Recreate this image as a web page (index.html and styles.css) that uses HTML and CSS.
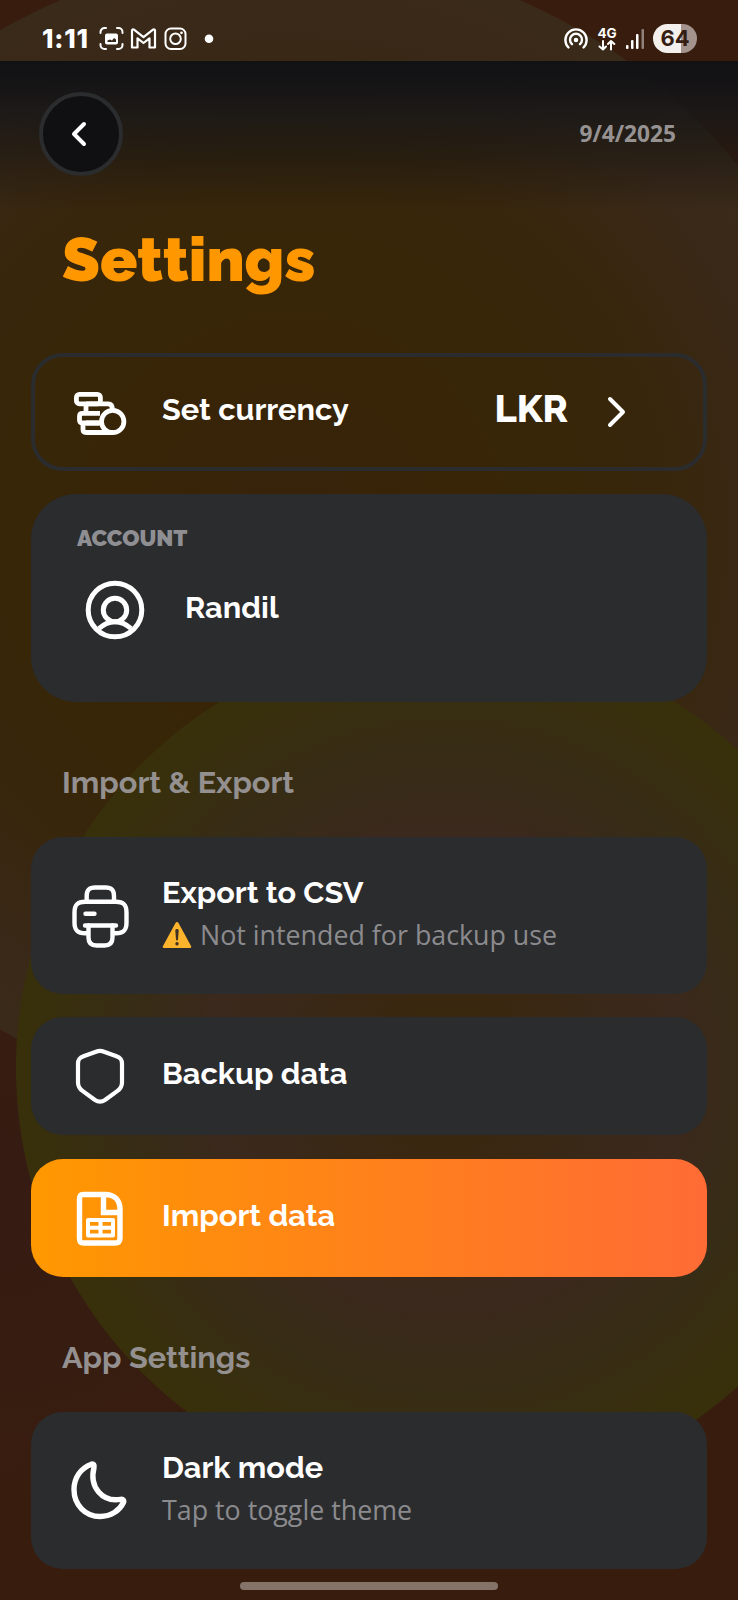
FILE: index.html
```html
<!DOCTYPE html>
<html lang="en">
<head>
<meta charset="utf-8">
<title>Settings</title>
<link rel="stylesheet" href="styles.css">
</head>
<body>
<div class="screen">
  <header class="status">
    <span class="clock">1:11</span>
    <svg class="st-left" width="122" height="30" viewBox="0 0 122 30" fill="none" stroke="#fff" stroke-width="2" stroke-linecap="round" stroke-linejoin="round">
      <path d="M1.500 9V8a4 4 0 0 1 4-4H7M18 4h1.500a4 4 0 0 1 4 4v1M23.500 20v1a4 4 0 0 1-4 4H18M7 25H5.500a4 4 0 0 1-4-4v-1"/>
      <rect x="6" y="9.500" width="13" height="11" rx="2" fill="#fff" stroke="none"/>
      <path d="M8.500 18v-1.500l2.500-1 2 1 2-2.500 2 1.500V18z" fill="#35291b" stroke="none"/>
      <path d="M33 23.500V6.500c0-1 1-1.500 2-.8l9.500 7.500L54 5.700c1-.7 2-.2 2 .8v17h-5.500v-9.200l-6 4.700-6-4.700v9.200z" stroke-width="2.200"/>
      <rect x="66.500" y="4.500" width="20" height="20.500" rx="5.500"/>
      <circle cx="76.500" cy="14.800" r="5.300"/><circle cx="82.500" cy="8.800" r="1.400" fill="#fff" stroke="none"/>
      <circle cx="110" cy="14.800" r="4.300" fill="#fff" stroke="none"/>
    </svg>
    <span class="grow"></span>
    <svg width="24" height="24" viewBox="0 0 24 24" fill="none" stroke="#fff" stroke-width="2.400" stroke-linecap="round"><path d="M4.500 20.500a10.600 10.600 0 1 1 15 0"/><path d="M8 17.200a6 6 0 1 1 8 0"/><circle cx="12" cy="13" r="2.300" fill="#fff" stroke="none"/></svg>
    <span class="net"><b>4G</b><svg width="18" height="11" viewBox="0 0 18 11" fill="none" stroke="#fff" stroke-width="2" stroke-linecap="round" stroke-linejoin="round"><path d="M5 1v8.500M1.500 6.500L5 9.500l3-3M13 9.500V1M10 4l3-3 3.300 3"/></svg></span>
    <svg class="bars" width="20" height="22" viewBox="0 0 20 22"><g fill="#fff"><rect x="1" y="17" width="2.500" height="4" rx="1"/><rect x="6" y="12" width="2.500" height="9" rx="1"/><rect x="11" y="6" width="2.500" height="15" rx="1"/><rect x="16.500" y="1" width="2.500" height="20" rx="1" opacity=".45"/></g></svg>
    <span class="battery">64</span>
  </header>

  <nav class="top">
    <span class="back"><svg width="16" height="26" viewBox="0 0 16 26" fill="none" stroke="#fff" stroke-width="4" stroke-linecap="round" stroke-linejoin="round"><path d="M13 3L3 13l10 10"/></svg></span>
    <span class="date">9/4/2025</span>
  </nav>

  <h1>Settings</h1>

  <main>
    <section class="card outline">
      <svg class="icon" width="64" height="64" viewBox="0 0 64 64" fill="none" stroke="#fff" stroke-width="4.800" stroke-linejoin="round">
        <g transform="translate(0 1)">
          <rect x="8.400" y="13.400" width="24" height="9.400" rx="3"/>
          <path d="M18 23v9M18 22.800h22c3.500 0 4.500 2.500 4.500 6M32 32.300H14.500c-2 0-3 1-3 3V39c0 2 1 3 3 3H31"/>
          <path d="M15 42v6.500c0 2 1 3 3 3h27M34 42H18"/>
          <circle cx="44.700" cy="40.500" r="11.200"/>
        </g>
      </svg>
      <span class="title">Set currency</span>
      <span class="grow"></span>
      <span class="code">LKR</span>
      <svg class="chev" width="20" height="32" viewBox="0 0 20 32" fill="none" stroke="#fff" stroke-width="4" stroke-linecap="round" stroke-linejoin="round"><path d="M4 3l13 13L4 29"/></svg>
    </section>

    <section class="account">
      <div class="label">ACCOUNT</div>
      <div class="user">
        <svg width="60" height="60" viewBox="0 0 60 60" fill="none" stroke="#fff" stroke-width="5"><circle cx="30" cy="30" r="26.800"/><circle cx="30" cy="30" r="11.700"/><path d="M14 48.500C19 44 24 41.700 30 41.700S41 44 46 48.500"/></svg>
        <span class="title">Randil</span>
      </div>
    </section>

    <h2>Import &amp; Export</h2>

    <section class="card tall">
      <svg class="icon" width="64" height="64" viewBox="0 0 64 64" fill="none" stroke="#fff" stroke-width="4.400" stroke-linecap="round" stroke-linejoin="round">
        <path d="M18.700 17v-5c0-6 2.500-8.500 8.500-8.500h10.300c6 0 8.500 2.500 8.500 8.500v5"/>
        <path d="M20 49.300h-3c-7.500 0-10.500-3-10.500-10.500V28.500c0-7.500 3-10.700 10.500-10.700h31c7.500 0 10.500 3.200 10.500 10.700v10.300c0 7.500-3 10.500-10.500 10.500h-3"/>
        <path d="M17 41.500h31M17.500 29.700h9"/>
        <path d="M20.500 41.500v12c0 5.500 2.500 8 8 8h8c5.500 0 8-2.500 8-8v-12"/>
      </svg>
      <div class="copy">
        <span class="title">Export to CSV</span>
        <span class="sub"><svg class="warn" width="30" height="28" viewBox="0 0 30 28"><path d="M13.500 2c.7-1.400 2.300-1.400 3 0L29 25c.6 1.200.2 2-1 2H2c-1.200 0-1.600-.8-1-2z" fill="#fbb42c"/><path d="M13.300 9.500c0-2 3.400-2 3.400 0L16 18.500c-.2 1.300-1.800 1.300-2 0z" fill="#3e3226"/><circle cx="15" cy="22.700" r="1.700" fill="#3e3226"/></svg>Not intended for backup use</span>
      </div>
    </section>

    <section class="card">
      <svg class="icon" width="64" height="64" viewBox="0 0 64 64" fill="none" stroke="#fff" stroke-width="4.200" stroke-linejoin="round"><path d="M28 7.700c3.500-1.300 4.500-1.300 8 0l12.500 4.500c4.300 1.600 5.500 3.300 5.500 7.500v18.800c0 4-1.200 6-4.500 8.400L37 56c-3.600 2.400-6.400 2.400-10 0L14.500 46.900c-3.300-2.400-4.500-4.400-4.500-8.400V19.700c0-4.200 1.200-5.900 5.500-7.500z"/></svg>
      <span class="title">Backup data</span>
    </section>

    <section class="card accent">
      <svg class="icon" width="64" height="64" viewBox="0 0 64 64" fill="none" stroke="#fff" stroke-width="5.400" stroke-linejoin="round">
        <path d="M16 8.500h21c9.500 0 15 5.500 15 15V52c0 3.500-1.500 5-5 5H16c-4 0-4.500-1-4.500-5V14c0-4 .5-5.500 4.500-5.500z"/>
        <path d="M35.500 9v17.500H52" stroke-linejoin="miter"/>
        <path d="M20 34h25v15.500H20zM32.500 34v15.500M20 41.700h25" stroke-width="4"/>
      </svg>
      <span class="title">Import data</span>
    </section>

    <h2>App Settings</h2>

    <section class="card tall">
      <svg class="icon" width="64" height="64" viewBox="0 0 64 64" fill="none" stroke="#fff" stroke-width="5.400" stroke-linejoin="round"><path d="M23.500 5.200C13 9 6 18.500 6 30.500 6 46 17.500 57.500 32 57.500c11 0 19.500-6 23.200-13.500 1.300-2.500 0-4.200-2.700-3.700-18 3-31.500-12-26.500-31.800.7-2.700-.5-3.900-2.500-3.300z"/></svg>
      <div class="copy">
        <span class="title">Dark mode</span>
        <span class="sub">Tap to toggle theme</span>
      </div>
    </section>
  </main>
  <div class="home"></div>
</div>
</body>
</html>
```

FILE: styles.css
```css
* { box-sizing: border-box; }
body { margin: 0; }
.screen {
  width: 738px;
  height: 1600px;
  overflow: hidden;
  display: flex;
  flex-direction: column;
  color: #fff;
  font-family: Raleway, Lato, sans-serif;
  background:
    radial-gradient(circle at 447px 1068px, #38260a 0, #39270f 70px, #3a281b 190px, #3a291c 245px, #372c15 320px, #38300b 420px, #38300b 430.500px, transparent 431.500px),
    radial-gradient(circle at 290px 530px, #37230a 0, #382507 200px, #372608 290px, #38260d 390px, #3a2919 510px, #3a2a19 577px, transparent 578px),
    radial-gradient(circle at 0 1200px, #361b13 0, #381d0f 300px);
}
.grow { flex: 1; }

.status { height: 61px; flex: none; display: flex; align-items: center; padding: 16px 41px 0 42px; }
.clock { font: 800 26px/30px Inter, sans-serif; width: 57px; letter-spacing: .8px; }
.net { width: 18px; margin: 0 9px 0 10px; display: flex; flex-direction: column; align-items: center; }
.net b { font: 700 13.500px/13px Inter, sans-serif; }
.bars { margin-right: 8px; }
.battery {
  width: 44px; height: 29px; border-radius: 15px; text-align: center;
  background: linear-gradient(90deg, #f3efed 28px, #a3938c 28px);
  color: #351d12; font: 700 22px/29px Inter, sans-serif;
}

.top {
  height: 150px; flex: none; display: flex; justify-content: space-between; align-items: flex-start;
  padding: 31px 62px 0 39px;
  background: linear-gradient(#121215 0, #121215f5 16px, #161617d0 50px, #17151280 95px, #17151200 150px);
}
.back {
  width: 84px; height: 84px; border-radius: 50%; border: 4px solid #2b2c2e; background: #101013;
  display: flex; align-items: center; justify-content: center; padding-right: 5px;
}
.date { font: 700 22.700px/32px "Open Sans", "Noto Sans", sans-serif; color: #969292; margin-top: 26px; }

h1 { margin: 11px 0 0 62px; height: 131px; flex: none; font-size: 61.500px; line-height: 74px; font-weight: 900; color: #ff9800; }
h2 { margin: 43px 0 0 31px; height: 92px; padding-top: 13px; font-size: 30.700px; line-height: 48px; font-weight: 700; color: #949090; }

main { padding: 0 31px; }
.card {
  height: 118px; margin-bottom: 24px; border-radius: 32px; background: #2b2c2e;
  display: flex; align-items: center; padding-left: 37px;
}
.card.outline { height: 118px; background: none; border: 4px solid #2b2c2e; padding: 0 77px 0 33px; margin-bottom: 23px; }
.card.tall { height: 157px; margin-bottom: 23px; }
.card.accent { background: linear-gradient(90deg, #ff9800, #ff6b35); }
.icon { flex: none; margin-right: 30px; }
.title { font-size: 30.700px; line-height: 40px; font-weight: 700; white-space: nowrap; margin-top: -6px; }
.code { font-size: 38px; line-height: 44px; font-weight: 800; margin: -6px 38px 0 0; }
.copy { display: flex; flex-direction: column; }
.copy .title { margin-top: -4px; }
.sub { font: 400 26.800px/42px "Open Sans", "Noto Sans", sans-serif; color: #8b8b8e; white-space: nowrap; display: flex; align-items: center; margin: 2px 0 -1px; }
.warn { margin-right: 8px; }

.account { height: 208px; border-radius: 45px; background: #2b2c2e; padding: 28px 46px; }
.label { font-size: 22.600px; line-height: 32px; font-weight: 900; color: #8f8f93; }
.user { display: flex; align-items: center; margin: 26px 0 0 8px; gap: 40px; }
.home { width: 258px; height: 8px; border-radius: 4px; background: #85736a; margin: -10px auto 0; flex: none; }
```
